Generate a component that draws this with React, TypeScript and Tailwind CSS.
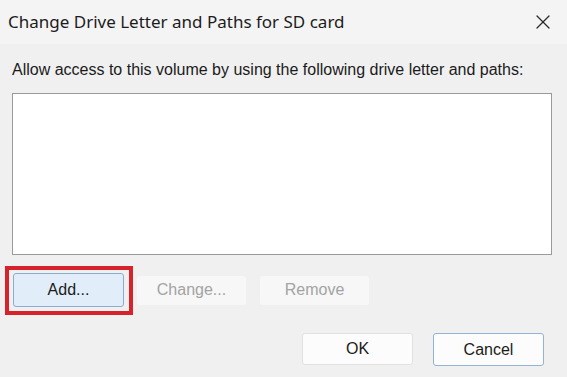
import { X } from 'lucide-react'

const sans = { fontFamily: '"Liberation Sans", Arial, sans-serif' }

function DialogButton({
  label,
  variant = 'normal',
}: {
  label: string
  variant?: 'normal' | 'focused' | 'disabled' | 'default'
}) {
  const styles = {
    normal: 'h-[32px] border-[#e1e1e1] bg-[#fcfcfc] text-[#1b1b1b]',
    default: 'h-[33px] border-[#92b3d1] bg-[#fcfcfc] text-[#1b1b1b]',
    focused: 'h-[34px] border-[#88aecf] bg-[#e1eefa] text-[#1b1b1b]',
    disabled: 'h-[31px] border-[#f0f0f0] bg-[#f7f7f7] text-[#a3a3a3]',
  }[variant]
  return (
    <button
      type="button"
      className={`flex w-[111px] items-center justify-center rounded-[3px] border text-[16px] ${styles}`}
      style={sans}
    >
      {label}
    </button>
  )
}

export default function App() {
  return (
    <div className="flex h-[377px] w-[567px] flex-col bg-[#f0f0f0]">
      <div className="flex h-[44px] items-center justify-between bg-[#f4f4f4] pl-[8px] pr-[12px]">
        <span
          className="text-[17px] text-[#1c1c1c]"
          style={{ fontFamily: '"Noto Sans", "Open Sans", sans-serif' }}
        >
          Change Drive Letter and Paths for SD card
        </span>
        <X className="h-[24px] w-[24px] text-[#2a2a2a]" strokeWidth={1.3} />
      </div>

      <div className="flex flex-col px-[12px]">
        <p className="mt-[16px] text-[16px] leading-[20px] text-[#1b1b1b]" style={sans}>
          Allow access to this volume by using the following drive letter and paths:
        </p>
        <div className="mt-[13px] h-[162px] w-[540px] border border-[#9a9a9a] bg-white" />

        <div className="mt-[18px] flex items-center gap-[12px] pl-[1px]">
          <div className="relative">
            <DialogButton label="Add..." variant="focused" />
            <span className="pointer-events-none absolute -bottom-[8px] -left-[8px] -right-[9px] -top-[7px] border-4 border-[#d7222c]" />
          </div>
          <DialogButton label="Change..." variant="disabled" />
          <DialogButton label="Remove" variant="disabled" />
        </div>

        <div className="mt-[26px] flex justify-end gap-[20px] pr-[11px]">
          <DialogButton label="OK" />
          <DialogButton label="Cancel" variant="default" />
        </div>
      </div>
    </div>
  )
}
